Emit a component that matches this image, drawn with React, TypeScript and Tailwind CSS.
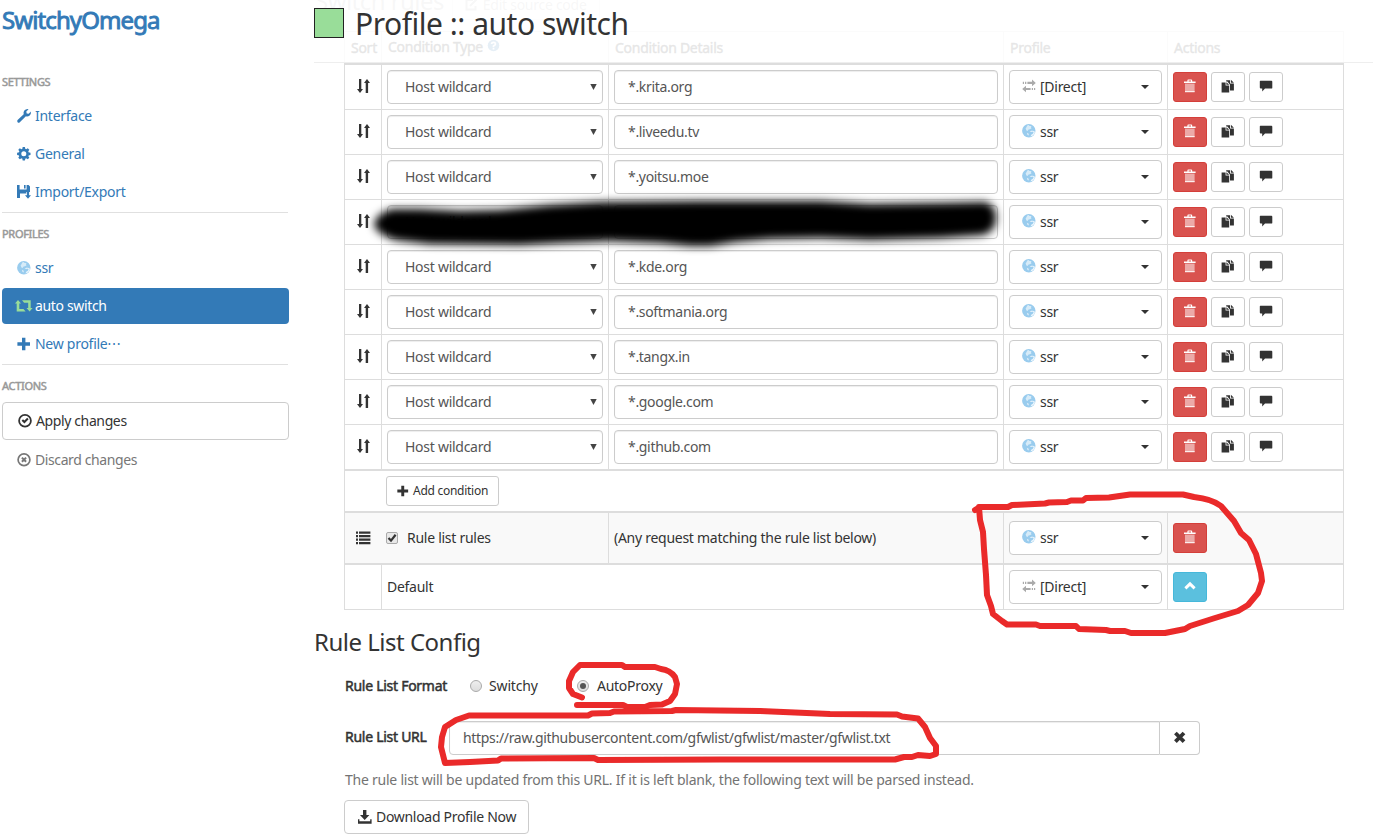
import type { ReactNode } from "react";

type IconProps = { className?: string };

function Glyph({ children, className = "" }: { children: ReactNode; className?: string }) {
  return (
    <svg viewBox="0 0 14 14" className={"h-[14px] w-[14px] shrink-0 overflow-visible " + className} fill="currentColor">
      {children}
    </svg>
  );
}

const WrenchIcon = (p: IconProps) => (
  <Glyph {...p}>
    <path d="M11.6 0.2 9.3 2.4 9.7 4.4 11.7 4.8 13.9 2.6Q14.4 5.2 12.4 6.8 10.8 7.9 8.9 7.3L2.8 13.2Q1.7 14.2 0.6 13.2 -0.3 12.1 0.6 11.1L6.7 5.2Q6.1 3.2 7.3 1.6 9 -0.4 11.6 0.2Z" />
  </Glyph>
);
const CogIcon = (p: IconProps) => (
  <Glyph {...p}>
    <circle cx="6.8" cy="6.8" r="3.8" fill="none" stroke="currentColor" strokeWidth="2.6" />
    {[0, 45, 90, 135, 180, 225, 270, 315].map((a) => (
      <path key={a} d="M5.2 2.4 5.7 0.1H7.9L8.4 2.4Z" transform={`rotate(${a} 6.8 6.8)`} />
    ))}
  </Glyph>
);
const SaveIcon = (p: IconProps) => (
  <Glyph {...p}>
    <path d="M0 0H2.6V4.6H9.6V0H11.6L13 1.4V7H9.3V8.4H3V13H0Z" />
    <path d="M7 0H8.6V3.4H7Z" />
    <path d="M9.9 7H12.1V10.3H14L11 13.8 8 10.3H9.9Z" />
  </Glyph>
);
const GlobeIcon = (p: IconProps) => (
  <Glyph {...p}>
    <circle cx="6.8" cy="6.8" r="6.7" fill="#99ccee" />
    <path d="M5.2 1.4 7 1 7.4 2 9.4 1.9 9 3.4 9.6 4.2 8 5.2 6.6 5.6 5.6 7 4.4 6.4 3.6 4.6 4.6 3Z" fill="#fff" opacity="0.6" />
    <path d="M7.6 7.4 9.8 8 10.4 9.2 9.2 11 8.4 12.600 10.600 11.800 12.4 9.900 13 7.8 11 6.800 9.2 6.7Z M5 8.8 6.6 9.800 6.600 11.6 5.6 10.900Z" fill="#fff" opacity="0.8" />
    <path d="M9.8 7.6 11.6 8 10.8 9.8 9.6 10.400Z" fill="#99ccee" />
  </Glyph>
);
const RetweetIcon = () => (
  <svg viewBox="0 0 18 12" className="-ml-[2px] h-3 w-[18px] shrink-0 text-[#99dd99]" fill="currentColor">
    <path d="M3 0 6 3.400H4.300V8.900H8.500L10.600 11.400H1.700V3.400H0Z" />
    <path d="M7 0.300H15.700V8H17.600L14.600 11.600 11.500 8H13.200V2.700H9.100Z" />
  </svg>
);
const PlusIcon = (p: IconProps) => (
  <Glyph {...p}>
    <path d="M5 0.8H8.4V5.3H13V8.7H8.4V13.2H5V8.7H0.4V5.3H5Z" />
  </Glyph>
);
const OkCircleIcon = (p: IconProps) => (
  <Glyph {...p}>
    <circle cx="7" cy="6.7" r="5.9" fill="none" stroke="currentColor" strokeWidth="1.8" />
    <path d="M3.6 6.7 5 5.3 6.4 6.6 9.2 3.8 10.6 5.2 6.4 9.6Z" />
  </Glyph>
);
const RemoveCircleIcon = (p: IconProps) => (
  <Glyph {...p}>
    <circle cx="7" cy="6.7" r="5.9" fill="none" stroke="currentColor" strokeWidth="1.7" />
    <path d="M4.9 4.600 9.1 8.800M9.1 4.600 4.9 8.800" stroke="currentColor" strokeWidth="2" />
  </Glyph>
);
const SortIcon = (p: IconProps) => (
  <Glyph {...p}>
    <path d="M3 0H5.300V10H7L4 14 1 10H3Z" />
    <path d="M9.7 14V4H8L11 0 14 4H12.1V14Z" />
  </Glyph>
);
const TransferIcon = (p: IconProps) => (
  <Glyph {...p}>
    <path d="M5.4 2.8H10V0.4L13.8 3.9 10 7.2V4.9H5.4Z M0.8 2.8H2V4.9H0.8Z M3 2.8H4.3V4.9H3Z" />
    <path d="M8.6 9H4V6.8L0.2 10.1 4 13.3V11.1H8.6Z M9.8 9H11V11.1H9.8Z M12 9H13.2V11.1H12Z" />
  </Glyph>
);
const TrashIcon = (p: IconProps) => (
  <Glyph {...p}>
    <path d="M1 2.6H4.4V1.4Q4.4 0.5 5.3 0.5H8.3Q9.2 0.5 9.2 1.4V2.6H12.6V4H1Z M5.6 1.5V2.6H8V1.5Z" fillRule="evenodd" />
    <path d="M2 4.6H11.6V13H2Z" opacity="0.5" />
    <path d="M2 12.2H11.6V13.2H2Z" />
  </Glyph>
);
const DuplicateIcon = (p: IconProps) => (
  <Glyph {...p}>
    <path d="M0.6 3.4H4.6V6.6H8.2V13.4H0.6Z" />
    <path d="M5.4 3.2 8.2 5.8H5.4Z" />
    <path d="M5.2 1.2H9V4.6H12.9V11.4H9V5.8L6.4 2.6H5.2Z" />
    <path d="M9.9 0.8 12.9 3.8H9.9Z" />
  </Glyph>
);
const CommentIcon = (p: IconProps) => (
  <Glyph {...p}>
    <path d="M1.4 1.8H12.4Q13.3 1.8 13.3 2.7V8.7Q13.3 9.6 12.4 9.6H6L3.2 12.6V9.6H1.8Q0.8 9.6 0.8 8.6V2.6Q0.8 1.8 1.4 1.8Z" />
  </Glyph>
);
const ListIcon = (p: IconProps) => (
  <Glyph {...p}>
    <path d="M0 0.6H2V2.7H0Z M3 0.6H14.4V2.7H3Z M0 4.1H2V6.2H0Z M3 4.1H14.4V6.2H3Z M0 7.6H2V9.7H0Z M3 7.6H14.4V9.7H3Z M0 11.1H2V13.2H0Z M3 11.1H14.4V13.2H3Z" />
  </Glyph>
);
const RemoveIcon = (p: IconProps) => (
  <Glyph {...p}>
    <path d="M2.4 2 11 10.6M11 2 2.4 10.6" stroke="currentColor" strokeWidth="3.8" />
  </Glyph>
);
const DownloadIcon = (p: IconProps) => (
  <Glyph {...p}>
    <path d="M5 0H8.4V5H11.4L6.7 10 2 5H5Z" />
    <path d="M0 9.2H1.4V11.2H12.2V9.2H13.6V13.8H0Z" />
  </Glyph>
);
const ChevronUpIcon = (p: IconProps) => (
  <Glyph {...p}>
    <path d="M2.4 9.3 7 4.9 11.6 9.3" fill="none" stroke="currentColor" strokeWidth="3" />
  </Glyph>
);
const QuestionIcon = (p: IconProps) => (
  <Glyph {...p}>
    <circle cx="6.5" cy="6.5" r="5.8" />
    <path d="M4.5 5Q4.7 3.3 6.5 3.3T8.5 5Q8.500 6.1 6.5 7V7.9M6.5 8.8V10.4" stroke="#fff" strokeWidth="1.7" fill="none" />
  </Glyph>
);
const EditIcon = (p: IconProps) => (
  <Glyph {...p}>
    <path d="M8 2H1.500V11.500H10.500V8M5 8 12 1" fill="none" stroke="currentColor" strokeWidth="2" />
  </Glyph>
);
const Caret = () => (
  <svg viewBox="0 0 8 4" className="h-1 w-2 shrink-0" fill="#333">
    <path d="M0 0H8L4 4Z" />
  </svg>
);

const bold = "[-webkit-text-stroke:0.5px_currentColor]";

function NavItem({ icon, label, className = "text-[#337ab7]" }: { icon: ReactNode; label: string; className?: string }) {
  return (
    <a className={"mb-0.5 flex h-9 items-center rounded-[4px] pl-[15px] " + className}>
      <span className="flex w-[18px] shrink-0 items-center">{icon}</span>
      <span>{label}</span>
    </a>
  );
}

function NavHeading({ children }: { children: string }) {
  return <div className={"mb-2 h-4 text-[11px] leading-4 tracking-[-0.3px] text-[#999] " + bold}>{children}</div>;
}

function Divider() {
  return <div className="mb-[13px] h-px w-[286px] bg-[#e0e0e0]" />;
}

function Sidebar() {
  return (
    <aside className="ml-0.5 w-[287px] shrink-0">
      <h1 className="mt-1 mb-[38px] h-8 text-[24px] leading-8 tracking-[-0.9px] text-[#337ab7] [-webkit-text-stroke:0.9px_currentColor]">SwitchyOmega</h1>
      <nav>
        <NavHeading>SETTINGS</NavHeading>
        <NavItem icon={<WrenchIcon />} label="Interface" />
        <NavItem icon={<CogIcon />} label="General" />
        <NavItem icon={<SaveIcon />} label="Import/Export" />
        <Divider />
        <NavHeading>PROFILES</NavHeading>
        <NavItem icon={<GlobeIcon />} label="ssr" />
        <NavItem icon={<RetweetIcon />} label="auto switch" className="bg-[#337ab7] tracking-[-0.35px] text-white" />
        <NavItem icon={<PlusIcon />} label="New profile⋯" />
        <Divider />
        <NavHeading>ACTIONS</NavHeading>
        <button className="mb-0.5 flex h-[38px] w-full items-center rounded-[4px] border border-[#ccc] pl-[15px] tracking-[-0.38px] text-[#333]">
          <span className="w-[18px]"><OkCircleIcon /></span>Apply changes
        </button>
        <NavItem icon={<RemoveCircleIcon />} label="Discard changes" className="tracking-[-0.4px] text-[#777]" />
      </nav>
    </aside>
  );
}

const columns = "grid grid-cols-[37px_227px_395px_164px_177px]";
const line = "border-l border-[#ddd]";

function ProfileSelect({ direct = false }: { direct?: boolean }) {
  return (
    <div className={line + " flex items-center pl-[5px]"}>
      <button className="flex h-[34px] w-[153px] items-center rounded-[4px] border border-[#ccc] bg-white px-3 text-left">
        {direct ? <TransferIcon className="-mt-0.5 text-[#aaa]" /> : <GlobeIcon className="-mt-0.5" />}
        <span className="ml-1 flex-1">{direct ? "[Direct]" : "ssr"}</span>
        <Caret />
      </button>
    </div>
  );
}

const smallButton = "flex h-[30px] w-[34px] items-center justify-center rounded-[3px] border pb-0.5";

function TrashButton() {
  return (
    <button className={smallButton + " border-[#d43f3a] bg-[#d9534f] text-white"}>
      <TrashIcon />
    </button>
  );
}

function RuleRow({ pattern, direct, last }: { pattern: string; direct?: boolean; last?: boolean }) {
  return (
    <div className={columns + " border-[#ddd] " + (last ? "h-[46px] border-b-2" : "h-[45px] border-b")}>
      <div className={line + " flex items-center justify-center pb-0.5"}>
        <SortIcon />
      </div>
      <div className={line + " flex items-center pl-[5px]"}>
        <div className="flex h-[34px] w-[216px] items-center rounded-[4px] border border-[#ccc] pr-[5px] pl-[17px] text-[#555] shadow-[inset_0_1px_1px_rgba(0,0,0,.075)]">
          <span className="flex-1">Host wildcard</span>
          <svg viewBox="0 0 7 6" className="h-[6px] w-[7px]" fill="#444"><path d="M0.3 0H6.700L3.5 6Z" /></svg>
        </div>
      </div>
      <div className={line + " flex items-center pl-[5px]"}>
        <div className="flex h-[34px] w-[384px] items-center rounded-[4px] border border-[#ccc] px-[13px] tracking-[-0.32px] text-[#555] shadow-[inset_0_1px_1px_rgba(0,0,0,.075)]">
          {pattern}
        </div>
      </div>
      <ProfileSelect direct={direct} />
      <div className={line + " flex items-center gap-1 border-r pl-[5px]"}>
        <TrashButton />
        <button className={smallButton + " border-[#ccc]"}><DuplicateIcon /></button>
        <button className={smallButton + " border-[#ccc]"}><CommentIcon /></button>
      </div>
    </div>
  );
}

function RulesTable() {
  const rules = ["*.krita.org", "*.liveedu.tv", "*.yoitsu.moe", "", "*.kde.org", "*.softmania.org", "*.tangx.in", "*.google.com", "*.github.com"];
  return (
    <div className="ml-[31px] w-[1000px]">
      <div className={columns + " h-[34px] border-t border-b-2 border-[#ddd] leading-[31px] " + bold}>
        <div className={line + " pl-1.5"}>Sort</div>
        <div className={line + " flex items-center gap-1 pl-1.5 pb-px leading-[30px]"}>
          Condition Type <QuestionIcon className="-mt-0.5 text-[#337ab7]" />
        </div>
        <div className={line + " pl-1.5"}>Condition Details</div>
        <div className={line + " pl-1.5"}>Profile</div>
        <div className={line + " border-r pl-1.5"}>Actions</div>
      </div>
      {rules.map((r, i) => (
        <RuleRow key={i} pattern={r} direct={i === 0} last={i === rules.length - 1} />
      ))}
      <div className="grid h-[42px] grid-cols-[37px_963px] border-b-2 border-[#ddd]">
        <div className={line} />
        <div className="flex items-center border-r border-[#ddd] pl-[5px]">
          <button className="flex h-[30px] w-[113px] items-center gap-1 rounded-[3px] border border-[#ccc] pl-[10px] text-[12px]">
            <PlusIcon className="h-3! w-3!" />Add condition
          </button>
        </div>
      </div>
      <div className={columns + " h-[52px] border-b-2 border-[#ddd] bg-[#f9f9f9]"}>
        <div className={line + " flex items-center justify-center"}><ListIcon /></div>
        <div className="flex items-center pl-[5px]">
          <span className="flex h-3 w-3 items-center justify-center rounded-[2px] border border-[#aaa] bg-[#e8e8e8]">
            <svg viewBox="0 0 10 10" className="h-[10px] w-[10px]"><path d="M1.5 5 4 7.6 8.6 1.800" fill="none" stroke="#333" strokeWidth="2.2" /></svg>
          </span>
          <span className="ml-[9px]">Rule list rules</span>
        </div>
        <div className={line + " flex items-center pl-[5px]"}>(Any request matching the rule list below)</div>
        <ProfileSelect />
        <div className={line + " flex items-center border-r pl-[5px]"}><TrashButton /></div>
      </div>
      <div className="grid h-[45px] grid-cols-[37px_622px_164px_177px] border-b border-[#ddd]">
        <div className={line} />
        <div className={line + " flex items-center pl-[5px]"}>Default</div>
        <ProfileSelect direct />
        <div className={line + " flex items-center border-r pl-[5px]"}>
          <button className={smallButton + " border-[#46b8da] bg-[#5bc0de] text-white"}><ChevronUpIcon /></button>
        </div>
      </div>
    </div>
  );
}

function Radio({ checked = false }: { checked?: boolean }) {
  return (
    <span className="flex h-3 w-3 items-center justify-center rounded-full border border-[#aaa] bg-linear-to-b from-[#eee] to-[#ddd]">
      {checked && <span className="h-1.5 w-1.5 rounded-full bg-[#555]" />}
    </span>
  );
}

function RuleListConfig() {
  return (
    <section className="mt-[15px] ml-0.5">
      <h2 className="-ml-px h-[34px] text-[24px] leading-[34px] tracking-[-0.5px]">Rule List Config</h2>
      <div className="mt-[17px] ml-[30px] flex h-5 items-center">
        <span className={"w-[125px] " + bold}>Rule List Format</span>
        <Radio />
        <span className="ml-[7px] w-[88px] tracking-[-0.15px]">Switchy</span>
        <Radio checked />
        <span className="ml-2">AutoProxy</span>
      </div>
      <div className="mt-[25px] ml-[30px] flex h-[34px] items-center">
        <span className={"-mt-0.5 w-[104px] " + bold}>Rule List URL</span>
        <div className="flex h-[34px] w-[711px] items-center rounded-l-[4px] border border-[#ccc] px-[13px] tracking-[-0.32px] text-[#555] shadow-[inset_0_1px_1px_rgba(0,0,0,.075)]">
          https://raw.githubusercontent.com/gfwlist/gfwlist/master/gfwlist.txt
        </div>
        <button className="flex h-[34px] w-10 items-center justify-center rounded-r-[4px] border border-l-0 border-[#ccc]">
          <RemoveIcon />
        </button>
      </div>
      <p className="mt-[15px] ml-[30px] h-5 leading-5 tracking-[-0.24px] text-[#737373]">
        The rule list will be updated from this URL. If it is left blank, the following text will be parsed instead.
      </p>
      <button className="mt-[10px] ml-[29px] flex h-[34px] w-[185px] items-center gap-1 rounded-[4px] border border-[#ccc] pl-[13px] tracking-[-0.3px]">
        <DownloadIcon />Download Profile Now
      </button>
    </section>
  );
}

function Scribbles() {
  return (
    <svg viewBox="0 0 1373 835" className="pointer-events-none absolute top-0 left-0 h-[835px] w-[1373px]" fill="none">
      <defs>
        <filter id="brush" x="-5%" y="-50%" width="110%" height="200%"><feGaussianBlur stdDeviation="4" /></filter>
        <filter id="pen" filterUnits="userSpaceOnUse" x="0" y="0" width="1373" height="835"><feGaussianBlur stdDeviation="0.5" /></filter>
      </defs>
      <path
        filter="url(#brush)"
        fill="#000"
        d="M374 224Q377 213 392 209L420 209 460 211 500 210 550 205 600 202 700 201 820 201 870 204 940 203 985 202Q996 205 996 218 996 231 983 235L940 238 870 240 820 238 770 239 735 242 710 246 690 246 660 243 610 241 560 243 520 245 430 244 395 240Q375 233 374 224Z"
      />
      <g stroke="#ea2a29" strokeWidth="6" strokeLinecap="round" strokeLinejoin="round" filter="url(#pen)">
        <path d="M975 510 980 507 1008 507 1012 505 1045 503.500 1049 502.500 1067 502 1071 500.500 1083 500.500 1086 498 1109 497.500 1130 494.500 1183 494.500 1194 497Q1212 499 1221 506L1234 521 1241 533 1249 540 1256 554 1261 573 1262 581 1258 593 1248 605 1238 611 1215 618 1190 626 1185 629 1165 633 1131 633 1125 631 1110 631 1106 630 1079 629 1076 626 1040 626 1036 624.500 1007 624.500 1002 621 993 614 991 606 987 595 986 575 984 549 983 532 980 520 979 507" />
        <path d="M582 697.500 573 694 569 688 569 681 573 672 580 665 622 665 625 667 655 667 661 669Q670 670 675 677L677 684 675 694 670 701 662 704.500 650 705 645 707 627 707 623 705 577 705" />
        <path d="M445 763 441 747 442 737 445 727 456 720 469 715.500 588 715.500 592 713.500 610 713 614 711.500 672 711 676 710 760 711 830 714 897 714.500 902 716.500 918 718.500 925 727 930 738 936 746 936 754 930 756 918 755 912 757 904 757 895 759.500 720 759.500 598 760 594 758 501 758.500 498 760.500 470 762Z" />
      </g>
    </svg>
  );
}

export default function App() {
  return (
    <div className="relative flex h-[835px] w-[1373px] overflow-hidden bg-white font-['Noto_Sans',sans-serif] text-[14px] leading-5 tracking-[-0.27px] text-[#333]">
      <Sidebar />
      <main className="relative ml-6 w-[1060px] shrink-0">
        <div className="flex h-[31px] items-start gap-2 text-[#bbb]">
          <h2 className="-mt-[14px] ml-0.5 text-[24px] leading-[30px] tracking-[-0.55px]">Switch rules</h2>
          <span className="-mt-2.5 flex h-[30px] items-center gap-1 rounded-[3px] border border-[#eee] px-3">
            <EditIcon />Edit source code
          </span>
        </div>
        <RulesTable />
        <RuleListConfig />
        <header className="absolute top-0 left-px flex h-[63px] w-[1060px] border-b border-[#eee] bg-white/88">
          <span className="mt-2 h-[30px] w-[30px] border border-[#222] bg-[#99dd99]" />
          <h1 className="mt-1 ml-[11px] h-10 text-[30px] leading-10 tracking-[-0.48px]">Profile :: auto switch</h1>
        </header>
      </main>
      <Scribbles />
    </div>
  );
}
